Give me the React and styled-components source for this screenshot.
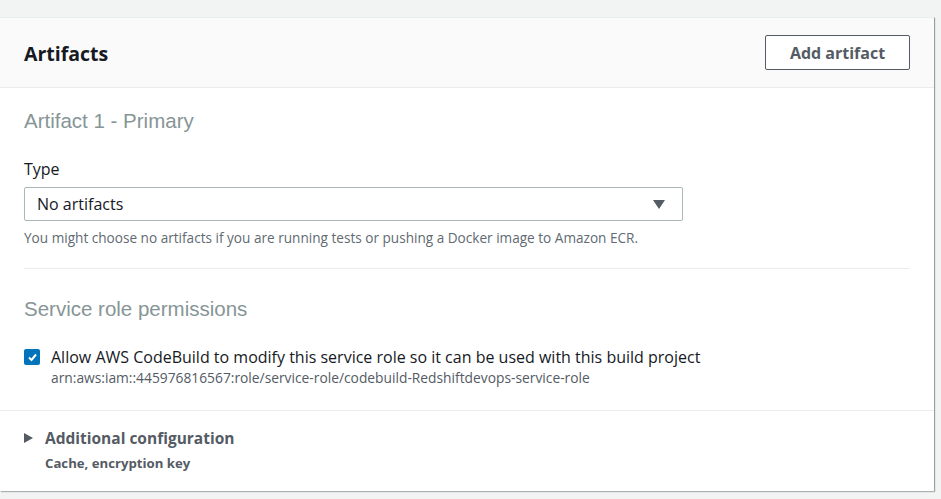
import React from "react";
import styled, { createGlobalStyle } from "styled-components";

const Global = createGlobalStyle`
  html, body { margin: 0; padding: 0; background: #f2f3f3; }
  body { font-family: "Open Sans", "Noto Sans", sans-serif; color: #16191f; }
  * { box-sizing: border-box; }
`;

const Page = styled.div`
  width: 941px;
  height: 499px;
  padding: 17px 7px 0 0;
  background: #f2f3f3;
`;

const Card = styled.section`
  background: #fff;
  border-top: 1px solid #eaeded;
  box-shadow: 1px 1px 1px 0 rgba(0, 28, 36, 0.3), 1px 0 0 0 #d5dbdb;
  height: 474px;
`;

const Header = styled.header`
  display: flex;
  align-items: center;
  justify-content: space-between;
  height: 70px;
  padding: 0 24px;
  background: #fafafa;
  border-bottom: 1px solid #eaeded;
`;

const Title = styled.h2`
  margin: 0;
  font-size: 19.5px;
  font-weight: 700;
  color: #16191f;
  padding-top: 1px;
`;

const Button = styled.button`
  width: 145px;
  height: 35px;
  background: #fff;
  border: 1px solid #545b64;
  border-radius: 2px;
  font-family: inherit;
  font-size: 16px;
  font-weight: 700;
  color: #545b64;
  padding: 0;
`;

const Body = styled.div`
  padding: 0 24px;
`;

const Section = styled.div`
  padding: ${(p) => p.$pad || "20px 0"};
  border-bottom: ${(p) => (p.$divider ? "1px solid #eaeded" : "none")};
`;

const SubTitle = styled.h3`
  margin: 0;
  font-family: "Liberation Sans", Arial, sans-serif;
  font-weight: 400;
  font-size: 20.5px;
  line-height: 28px;
  color: #879596;
`;

const Label = styled.label`
  display: block;
  font-size: 16px;
  line-height: 22px;
  color: #16191f;
  margin-top: ${(p) => p.$mt || "0"};
`;

const Select = styled.div`
  display: flex;
  align-items: center;
  justify-content: space-between;
  width: 659px;
  height: 34px;
  margin-top: 7px;
  padding: 0 17px 0 12px;
  border: 1px solid #aab7b8;
  border-radius: 2px;
  font-size: 16px;
  color: #16191f;
`;

const Help = styled.div`
  font-size: 13.6px;
  line-height: 18px;
  color: #5f6a72;
  margin-top: 8px;
`;

const CheckRow = styled.div`
  display: flex;
  gap: 11px;
  align-items: flex-start;
  margin-top: ${(p) => p.$mt || "0"};
`;

const Box = styled.span`
  flex: none;
  width: 16px;
  height: 16px;
  margin-top: 3px;
  border-radius: 2px;
  background: #0073bb;
  display: flex;
  align-items: center;
  justify-content: center;
`;

const CheckText = styled.div`
  font-size: 16px;
  line-height: 22px;
  color: #16191f;
`;

const Arn = styled.div`
  font-size: 13.8px;
  line-height: 20px;
  color: #545b64;
`;

const Expander = styled.div`
  display: flex;
  gap: 12px;
  padding: 16px 24px;
`;

const Caret = styled.span`
  flex: none;
  width: 0;
  height: 0;
  margin-top: 6px;
  border-top: 5px solid transparent;
  border-bottom: 5px solid transparent;
  border-left: 9px solid #545b64;
`;

const ExpTitle = styled.div`
  font-size: 15.5px;
  font-weight: 700;
  line-height: 22px;
  color: #545b64;
`;

const ExpSub = styled.div`
  font-size: 13.2px;
  font-weight: 700;
  line-height: 18px;
  color: #545b64;
  margin-top: 5px;
`;

const Arrow = styled.span`
  width: 0;
  height: 0;
  border-left: 6px solid transparent;
  border-right: 6px solid transparent;
  border-top: 9px solid #545b64;
`;

export default function App() {
  return (
    <>
      <Global />
      <Page>
        <Card>
          <Header>
            <Title>Artifacts</Title>
            <Button>Add artifact</Button>
          </Header>
          <Body>
            <Section $divider $pad="19px 0 21px">
              <SubTitle>Artifact 1 - Primary</SubTitle>
              <Label $mt="23px">Type</Label>
              <Select>
                <span>No artifacts</span>
                <Arrow />
              </Select>
              <Help>
                You might choose no artifacts if you are running tests or pushing a Docker image to Amazon ECR.
              </Help>
            </Section>
          </Body>
          <Section $divider $pad="26px 24px 22px">
            <SubTitle>Service role permissions</SubTitle>
            <CheckRow $mt="23px">
              <Box>
                <svg width="11" height="11" viewBox="0 0 11 11">
                  <path d="M2 5.5 L4.5 8 L9 2.5" fill="none" stroke="#fff" strokeWidth="2" />
                </svg>
              </Box>
              <div>
                <CheckText>Allow AWS CodeBuild to modify this service role so it can be used with this build project</CheckText>
                <Arn>arn:aws:iam::445976816567:role/service-role/codebuild-Redshiftdevops-service-role</Arn>
              </div>
            </CheckRow>
          </Section>
          <Expander>
            <Caret />
            <div>
              <ExpTitle>Additional configuration</ExpTitle>
              <ExpSub>Cache, encryption key</ExpSub>
            </div>
          </Expander>
        </Card>
      </Page>
    </>
  );
}
